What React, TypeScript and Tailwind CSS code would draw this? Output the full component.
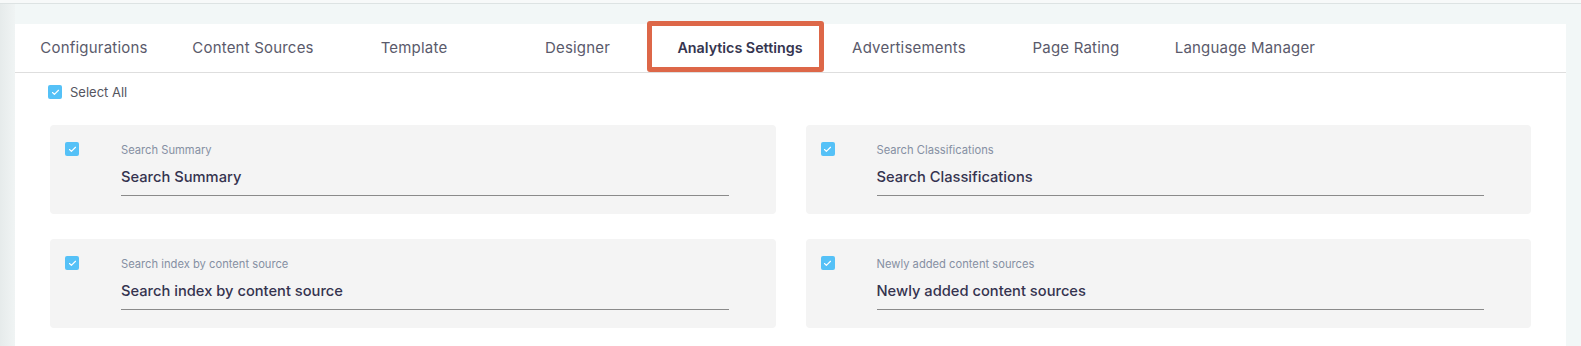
import { Check } from 'lucide-react'

const tabs = [
  { label: 'Configurations', width: 'w-[158px]' },
  { label: 'Content Sources', width: 'w-[160px]' },
  { label: 'Template', width: 'w-[162px]' },
  { label: 'Designer', width: 'w-[165px]' },
  { label: 'Analytics Settings', width: 'w-[166px]', active: true },
  { label: 'Advertisements', width: 'w-[166px]' },
  { label: 'Page Rating', width: 'w-[168px]' },
  { label: 'Language Manager', width: 'w-[170px]' },
]

const reports = [
  'Search Summary',
  'Search Classifications',
  'Search index by content source',
  'Newly added content sources',
]

function Tick({ className = '' }: { className?: string }) {
  return (
    <span
      className={`flex h-[14px] w-[14px] shrink-0 items-center justify-center rounded-[2px] bg-[#55c1f7] ${className}`}
    >
      <Check className="h-[9px] w-[9px] text-white" strokeWidth={3} />
    </span>
  )
}

export default function App() {
  return (
    <div className="h-[346px] w-[1581px] overflow-hidden bg-[#f2f7f7] font-['Inter','Liberation_Sans',sans-serif]">
      {/* strip at the very top */}
      <div className="h-[3px] bg-[#f7f9f9]" />
      <div className="h-px bg-[#dde3e3]" />

      <div className="flex">
        <div className="w-[15px] shrink-0 bg-gradient-to-r from-[#e6ebeb] to-[#f0f4f4]" />

        <div className="mt-5 h-[400px] w-[1551px] bg-white">
          {/* tabs */}
          <div className="flex h-[49px] border-b border-[#dedede]">
            {tabs.map((tab) => (
              <div
                key={tab.label}
                className={`relative flex ${tab.width} items-center justify-center ${
                  tab.active
                    ? 'pr-[6px] text-[14.3px] font-semibold text-[#35354f]'
                    : 'text-[15px] tracking-[0.2px] text-[#5a5a6b]'
                }`}
              >
                {tab.active && (
                  <span className="absolute -top-[3px] bottom-0 -left-[13px] right-[2px] rounded-[3px] border-[5px] border-[#dd6748]" />
                )}
                <span className="relative">{tab.label}</span>
              </div>
            ))}
          </div>

          {/* select all */}
          <div className="flex items-center gap-2 pl-[33px] pt-3">
            <Tick />
            <span className="text-[13px] leading-[14px] text-[#555560]">Select All</span>
          </div>

          {/* report cards */}
          <div className="grid grid-cols-2 gap-x-[30px] gap-y-[25px] pl-[35px] pr-[35px] pt-[26px]">
            {reports.map((name) => (
              <div key={name} className="flex h-[89px] rounded-[4px] bg-[#f4f4f4] pl-[15px] pt-[17px] pr-[47px]">
                <Tick />
                <div className="ml-[42px] flex-1">
                  <div className="pt-px text-[11.2px] leading-[14px] text-[#8690a3]">{name}</div>
                  <div className="mt-[10px] border-b border-[#8a8a8a] pb-[8px] text-[14.7px] font-medium leading-[20px] text-[#34334f]">
                    {name}
                  </div>
                </div>
              </div>
            ))}
          </div>
        </div>

        <div className="flex-1" />
      </div>
    </div>
  )
}
